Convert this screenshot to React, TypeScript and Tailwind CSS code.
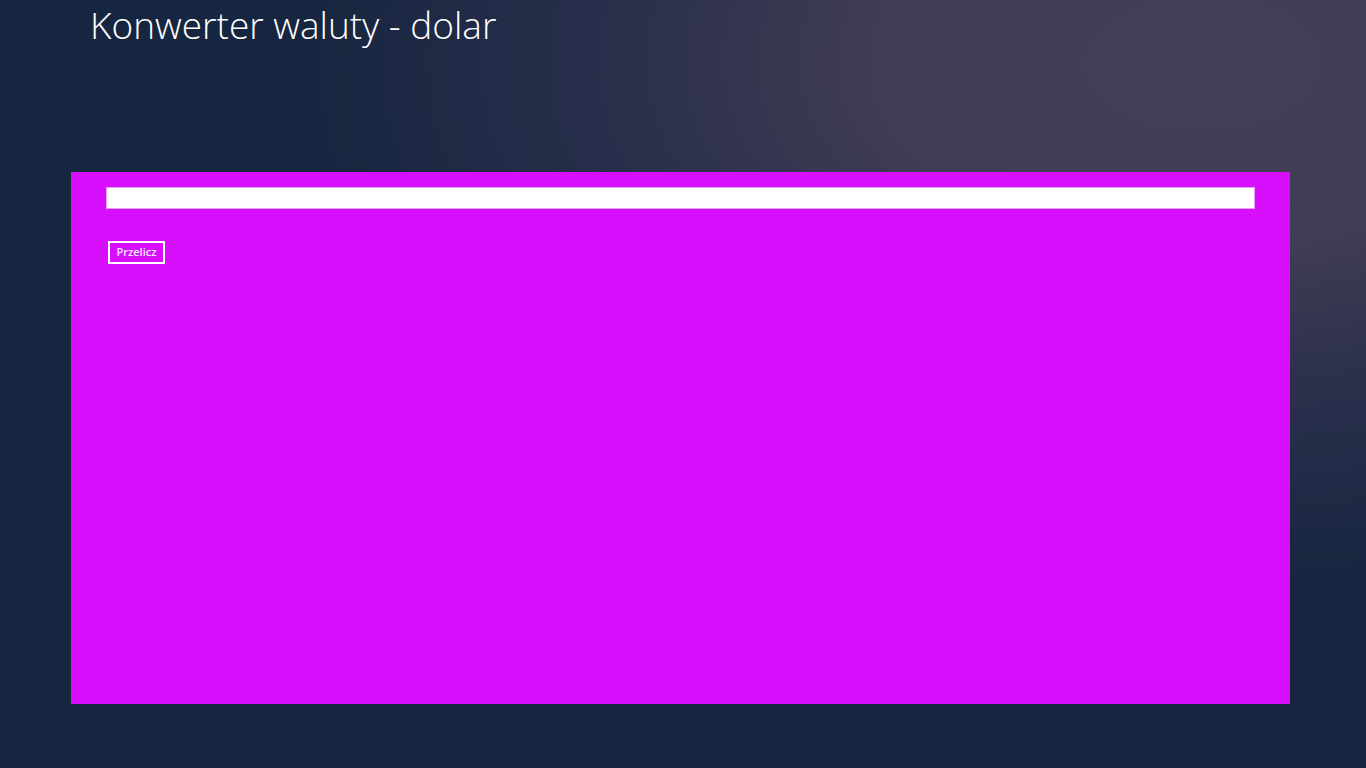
export default function App() {
  return (
    <div className="relative min-h-[768px] w-full overflow-hidden bg-[#172640]" style={{ fontFamily: '"Open Sans", "Noto Sans", sans-serif' }}>
      <div className="min-h-[768px] w-full bg-[radial-gradient(ellipse_900px_520px_at_88%_8%,#433f56_0%,#413d55_35%,#2a2f4c_65%,rgba(23,38,64,0)_100%)]">
        <div className="flex flex-col">
          <h1 className="pl-[90px] pt-[1px] text-[37px] font-light leading-[48px] text-white">
            Konwerter waluty - dolar
          </h1>
          <div className="ml-[71px] mt-[123px] h-[532px] w-[1219px] bg-[#d80ffc] px-[35px] pt-[15px]">
            <input
              type="text"
              className="block h-[22px] w-full border border-[#e7a0f5] bg-white outline-none"
            />
            <button className="ml-[2px] mt-[32px] flex h-[23px] w-[57px] items-center justify-center border-2 border-white text-[11px] font-semibold text-[#fbe6ff]">
              Przelicz
            </button>
          </div>
        </div>
      </div>
    </div>
  );
}
